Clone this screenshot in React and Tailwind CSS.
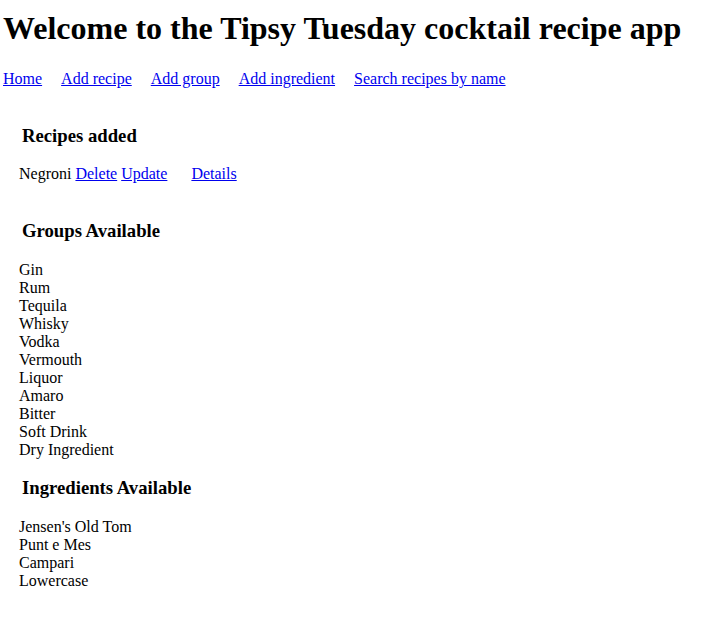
export default function App() {
  const groups = ["Gin","Rum","Tequila","Whisky","Vodka","Vermouth","Liquor","Amaro","Bitter","Soft Drink","Dry Ingredient"];
  const ingredients = ["Jensen's Old Tom","Punt e Mes","Campari","Lowercase"];
  const link = "text-[#0000ee] underline";
  return (
    <div className="font-['Liberation_Serif',serif] text-black bg-white min-h-[620px] text-[16px]">
      <h1 className="text-[32px] font-bold leading-[37px] pt-[10px] pl-[3px]">Welcome to the Tipsy Tuesday cocktail recipe app</h1>
      <nav className="flex gap-[19px] pl-[3px] mt-[23px] leading-[18px]">
        <a href="#" className={link}>Home</a>
        <a href="#" className={link}>Add recipe</a>
        <a href="#" className={link}>Add group</a>
        <a href="#" className={link}>Add ingredient</a>
        <a href="#" className={link}>Search recipes by name</a>
      </nav>
      <div className="pl-[19px]">
        <h3 className="text-[18.72px] font-bold leading-[21px] mt-[37px] pl-[3px]">Recipes added</h3>
        <div className="mt-[19px] leading-[18px] flex">
          <span>Negroni</span>
          <a href="#" className={link + " ml-[4px]"}>Delete</a>
          <a href="#" className={link + " ml-[4px]"}>Update</a>
          <a href="#" className={link + " ml-[24px]"}>Details</a>
        </div>
        <h3 className="text-[18.72px] font-bold leading-[21px] mt-[37px] pl-[3px]">Groups Available</h3>
        <ul className="mt-[20px] leading-[18px]">
          {groups.map(g => <li key={g}>{g}</li>)}
        </ul>
        <h3 className="text-[18.72px] font-bold leading-[21px] mt-[18px] pl-[3px]">Ingredients Available</h3>
        <ul className="mt-[20px] leading-[18px]">
          {ingredients.map(g => <li key={g}>{g}</li>)}
        </ul>
      </div>
    </div>
  );
}
